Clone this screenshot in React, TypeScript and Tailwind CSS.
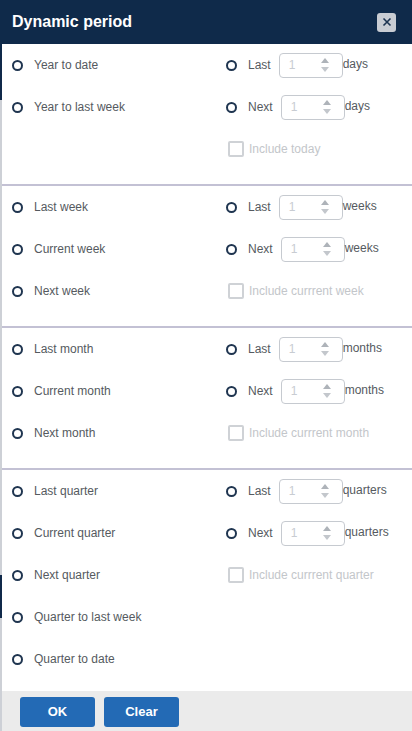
import React from "react";

const Radio = () => (
  <span className="inline-block w-[11px] h-[11px] rounded-full border-2 border-[#1f3550] shrink-0" />
);

const Spin = () => (
  <svg width="10" height="18" viewBox="0 0 10 18" className="shrink-0">
    <path d="M1 7 L5 2 L9 7 Z" fill="#aeb3b9" />
    <path d="M1 11 L5 16 L9 11 Z" fill="#c3c7cc" />
  </svg>
);

const NumBox = () => (
  <div className="flex items-center justify-between w-[64px] h-[25px] border border-[#c6cad0] rounded-[4px] pl-[9px] pr-[12px] text-[12px] text-[#c8ccd2]">
    <span>1</span>
    <Spin />
  </div>
);

const Row = ({ children }: { children: React.ReactNode }) => (
  <div className="h-[42px] flex items-center">{children}</div>
);

const Left = ({ label }: { label: string }) => (
  <div className="flex items-center pl-[10px] w-[224px] shrink-0">
    {label && (
      <>
        <Radio />
        <span className="ml-[11px] text-[12px] text-[#555a60]">{label}</span>
      </>
    )}
  </div>
);

const Right = ({ kind, unit }: { kind: string; unit: string }) => (
  <div className="flex items-center">
    <Radio />
    <span className="ml-[11px] mr-[8px] text-[12px] text-[#555a60]">{kind}</span>
    <NumBox />
    <span className="-mt-[3px] text-[12px] text-[#555a60]">{unit}</span>
  </div>
);

const Check = ({ label }: { label: string }) => (
  <div className="flex items-center pl-[2px]">
    <span className="inline-block w-[16px] h-[16px] border-2 border-[#cfd2d6] rounded-[2px]" />
    <span className="ml-[5px] text-[12px] text-[#c3c6ca]">{label}</span>
  </div>
);

const Section = ({
  rows,
  unit,
  include,
  last,
}: {
  rows: string[];
  unit: string;
  include: string;
  last?: boolean;
}) => (
  <div className={last ? "" : "pb-[14px] border-b-2 border-[#c3c1d4]"}>
    {rows.map((r, i) => (
      <Row key={r || "empty"}>
        <Left label={r} />
        {i === 0 && <Right kind="Last" unit={unit} />}
        {i === 1 && <Right kind="Next" unit={unit} />}
        {i === 2 && <Check label={include} />}
      </Row>
    ))}
  </div>
);

export default function App() {
  return (
    <div
      className="w-[412px] h-[731px] flex bg-[#c9cdd3] overflow-hidden"
      style={{ fontFamily: "'Liberation Sans', Arial, sans-serif" }}
    >
      <div className="w-[2px] shrink-0 flex flex-col">
        <div className="h-[55px] bg-[#0f2a4a]" />
        <div className="h-[45px] bg-[#10294a]" />
        <div className="h-[475px] bg-[#cdd0d6]" />
        <div className="h-[43px] bg-[#10294a]" />
        <div className="flex-1 bg-[#cdd0d6]" />
      </div>
      <div className="flex-1 flex flex-col bg-white">
        <div className="h-[44px] bg-[#0f2a4a] flex items-center justify-between pl-[10px] pr-[16px] shrink-0">
          <span className="text-white font-bold text-[16px]">Dynamic period</span>
          <span className="w-[19px] h-[19px] rounded-[3px] bg-[#c8ccd3] flex items-center justify-center">
            <svg width="10" height="10" viewBox="0 0 10 10">
              <path d="M1.5 1.5 L8.5 8.5 M8.5 1.5 L1.5 8.5" stroke="#1c3350" strokeWidth="1.6" />
            </svg>
          </span>
        </div>
        <div className="flex-1">
          <Section
            rows={["Year to date", "Year to last week", ""]}
            unit="days"
            include="Include today"
          />
          <Section
            rows={["Last week", "Current week", "Next week"]}
            unit="weeks"
            include="Include currrent week"
          />
          <Section
            rows={["Last month", "Current month", "Next month"]}
            unit="months"
            include="Include currrent month"
          />
          <Section
            rows={[
              "Last quarter",
              "Current quarter",
              "Next quarter",
              "Quarter to last week",
              "Quarter to date",
            ]}
            unit="quarters"
            include="Include currrent quarter"
            last
          />
        </div>
        <div className="h-[40px] bg-[#ebebeb] flex items-start pt-[6px] pl-[18px] gap-[9px] shrink-0">
          <button className="w-[75px] h-[30px] rounded-[3px] bg-[#236ab5] text-white text-[13px] font-bold">
            OK
          </button>
          <button className="w-[75px] h-[30px] rounded-[3px] bg-[#236ab5] text-white text-[13px] font-bold">
            Clear
          </button>
        </div>
      </div>
    </div>
  );
}
